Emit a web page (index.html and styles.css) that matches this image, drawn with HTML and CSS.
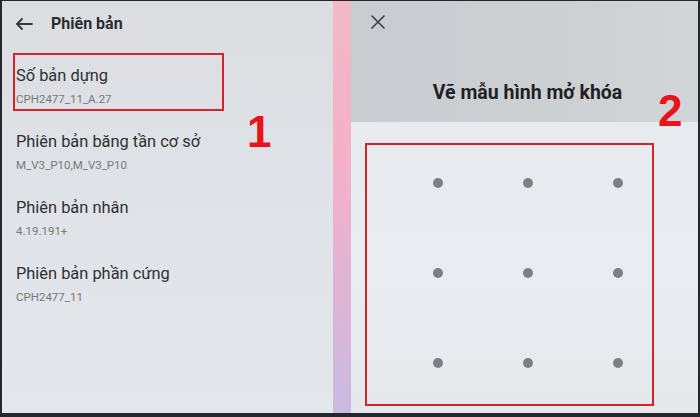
FILE: index.html
```html
<!DOCTYPE html>
<html lang="vi">
<head>
<meta charset="utf-8">
<title>Phiên bản</title>
<link rel="stylesheet" href="styles.css">
</head>
<body>
<div class="frame">
  <section class="panel left">
    <header class="topbar">
      <svg class="back" width="18" height="12" viewBox="0 0 18 12" aria-hidden="true">
        <path d="M17 6H2M7 1L2 6l5 5" fill="none" stroke="#35373a" stroke-width="1.8" stroke-linecap="round" stroke-linejoin="round"/>
      </svg>
      <h1 class="page-title">Phiên bản</h1>
    </header>
    <ul class="items">
      <li class="item"><div class="item-title">Số bản dựng</div><div class="item-sub">CPH2477_11_A.27</div></li>
      <li class="item"><div class="item-title">Phiên bản băng tần cơ sở</div><div class="item-sub">M_V3_P10,M_V3_P10</div></li>
      <li class="item"><div class="item-title">Phiên bản nhân</div><div class="item-sub">4.19.191+</div></li>
      <li class="item"><div class="item-title">Phiên bản phần cứng</div><div class="item-sub">CPH2477_11</div></li>
    </ul>
    <div class="mark mark-box-1"></div>
    <div class="num num-1">1</div>
  </section>
  <div class="strip"></div>
  <section class="panel right">
    <header class="lock-head">
      <svg class="close" width="14" height="14" viewBox="0 0 14 14" aria-hidden="true">
        <path d="M1 1l12 12M13 1L1 13" fill="none" stroke="#3a3c3f" stroke-width="1.6" stroke-linecap="round"/>
      </svg>
      <h2 class="lock-title">Vẽ mẫu hình mở khóa</h2>
    </header>
    <div class="lock-body">
      <div class="dots">
        <span class="dot"></span><span class="dot"></span><span class="dot"></span>
        <span class="dot"></span><span class="dot"></span><span class="dot"></span>
        <span class="dot"></span><span class="dot"></span><span class="dot"></span>
      </div>
    </div>
    <div class="mark mark-box-2"></div>
    <div class="num num-2">2</div>
  </section>
</div>
</body>
</html>
```

FILE: styles.css
```css
* { box-sizing: border-box; }
html, body { margin: 0; padding: 0; }
body {
  width: 700px;
  height: 417px;
  overflow: hidden;
  background: #24282d;
  font-family: Roboto, "Noto Sans", "Liberation Sans", sans-serif;
}
.frame {
  display: flex;
  width: 700px;
  height: 417px;
  padding: 1px 2px 4px 2px;
}
.panel { position: relative; height: 100%; }
.left {
  width: 331px;
  background: linear-gradient(180deg, #dbdde1 0%, #dfe2e6 45%, #e4e7eb 100%);
}
.strip {
  width: 18px;
  height: 100%;
  background: linear-gradient(180deg, #f2b9ca 0%, #f5b0c8 40%, #dcb5d8 75%, #c9bbe2 100%);
}
.right {
  flex: 1;
  display: flex;
  flex-direction: column;
  background: #e6e9ed;
}

/* left panel */
.topbar {
  display: flex;
  align-items: center;
  height: 20px;
  margin-top: 13px;
  padding-left: 13px;
}
.back { display: block; margin-right: 18px; }
.page-title {
  margin: 0;
  font-size: 16px;
  line-height: 20px;
  font-weight: 700;
  color: #2b2d30;
}
.items {
  list-style: none;
  margin: 32px 0 0 0;
  padding: 0 0 0 14px;
}
.item { height: 66px; }
.item-title {
  font-size: 16.4px;
  line-height: 20px;
  color: #2e3033;
}
.item-sub {
  margin-top: 6px;
  font-size: 11.5px;
  line-height: 14px;
  color: #77797d;
}

/* right panel */
.lock-head {
  position: relative;
  height: 121px;
  background: linear-gradient(90deg, #c9ccd0 0%, #cdd0d3 60%, #d3d6d9 100%);
}
.close { position: absolute; left: 20px; top: 14px; display: block; }
.lock-title {
  margin: 0;
  padding-top: 80px;
  text-align: center;
  font-size: 19.5px;
  line-height: 24px;
  font-weight: 700;
  color: #1f2124;
  padding-left: 6px;
}
.lock-body {
  flex: 1;
  padding: 56px 0 0 82px;
  background: linear-gradient(180deg, #e7eaee 0%, #e9ecf0 50%, #e6e9ec 100%);
}
.dots {
  display: grid;
  grid-template-columns: repeat(3, 10px);
  grid-auto-rows: 10px;
  column-gap: 80px;
  row-gap: 80px;
}
.dot {
  width: 10px;
  height: 10px;
  border-radius: 50%;
  background: #7c7f83;
}

/* annotations */
.mark {
  position: absolute;
  border: 2px solid #d3242b;
}
.mark-box-1 { left: 11px; top: 52px; width: 211px; height: 58px; }
.mark-box-2 { left: 14px; top: 142px; width: 289px; height: 263px; }
.num {
  position: absolute;
  font-family: "Liberation Sans", Arial, sans-serif;
  font-weight: 700;
  font-size: 44px;
  line-height: 44px;
  color: #e8141c;
}
.num-1 { left: 245px; top: 109px; }
.num-2 { left: 307px; top: 88px; }
```
